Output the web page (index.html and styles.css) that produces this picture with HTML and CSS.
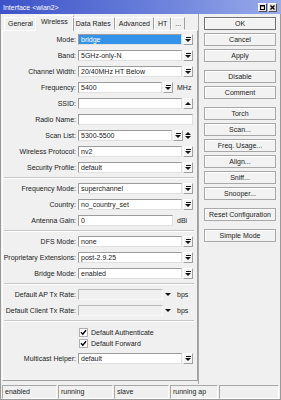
FILE: index.html
```html
<!DOCTYPE html>
<html lang="en">
<head>
  <meta charset="UTF-8">
  <title>Interface &lt;wlan2&gt;</title>
  <link rel="stylesheet" href="styles.css">
</head>
<body>

<div class="window">
  <div class="titlebar">
    <span class="title">Interface &lt;wlan2&gt;</span>
    <div class="tb-btns">
      <span class="tb-btn"><svg width="5" height="5" viewBox="0 0 5 5"><rect x="0.5" y="0.5" width="4" height="4" fill="none" stroke="#000"/><rect width="5" height="1.5" fill="#000"/></svg></span>
      <span class="tb-btn"><svg width="5" height="5" viewBox="0 0 5 5"><path d="M0.5 0.5l4 4M4.5 0.5l-4 4" stroke="#000" stroke-width="1.3"/></svg></span>
    </div>
  </div>

  <div class="main">
    <div class="left">
      <div class="tabs">
        <span class="tab">General</span>
        <span class="tab active">Wireless</span>
        <span class="tab">Data Rates</span>
        <span class="tab">Advanced</span>
        <span class="tab">HT</span>
        <span class="tab">...</span>
      </div>

      <div class="panel">
        <div class="group">
          <div class="row"><span class="lbl">Mode:</span><div class="field"><span class="input sel">bridge</span><span class="dd"></span></div></div>
          <div class="row"><span class="lbl">Band:</span><div class="field"><span class="input">5GHz-only-N</span><span class="dd"></span></div></div>
          <div class="row"><span class="lbl">Channel Width:</span><div class="field"><span class="input">20/40MHz HT Below</span><span class="dd"></span></div></div>
          <div class="row"><span class="lbl">Frequency:</span><div class="field"><span class="input">5400</span><span class="dd"></span><span class="unit">MHz</span></div></div>
          <div class="row"><span class="lbl">SSID:</span><div class="field"><span class="input"></span><span class="dd up"></span></div></div>
          <div class="row"><span class="lbl">Radio Name:</span><div class="field"><span class="input"></span></div></div>
          <div class="row"><span class="lbl">Scan List:</span><div class="field"><span class="input">5300-5500</span><span class="dd"></span><span class="updown"></span></div></div>
          <div class="row"><span class="lbl">Wireless Protocol:</span><div class="field"><span class="input">nv2</span><span class="dd"></span></div></div>
          <div class="row"><span class="lbl">Security Profile:</span><div class="field"><span class="input">default</span><span class="dd"></span></div></div>
        </div>

        <div class="sep"></div>

        <div class="group">
          <div class="row"><span class="lbl">Frequency Mode:</span><div class="field"><span class="input">superchannel</span><span class="dd"></span></div></div>
          <div class="row"><span class="lbl">Country:</span><div class="field"><span class="input">no_country_set</span><span class="dd"></span></div></div>
          <div class="row"><span class="lbl">Antenna Gain:</span><div class="field"><span class="input">0</span><span class="unit">dBi</span></div></div>
        </div>

        <div class="sep"></div>

        <div class="group">
          <div class="row"><span class="lbl">DFS Mode:</span><div class="field"><span class="input">none</span><span class="dd"></span></div></div>
          <div class="row"><span class="lbl">Proprietary Extensions:</span><div class="field"><span class="input">post-2.9.25</span><span class="dd"></span></div></div>
          <div class="row"><span class="lbl">Bridge Mode:</span><div class="field"><span class="input">enabled</span><span class="dd"></span></div></div>
        </div>

        <div class="sep"></div>

        <div class="group">
          <div class="row"><span class="lbl">Default AP Tx Rate:</span><div class="field"><span class="input off"></span><span class="arrow"></span><span class="unit">bps</span></div></div>
          <div class="row"><span class="lbl">Default Client Tx Rate:</span><div class="field"><span class="input off"></span><span class="arrow"></span><span class="unit">bps</span></div></div>
        </div>

        <div class="sep"></div>

        <div class="checks">
          <div class="check"><span class="cb"><svg width="7" height="7" viewBox="0 0 7 7"><path d="M1 3.3l1.8 1.9L6 1.2" stroke="#000" stroke-width="1.4" fill="none"/></svg></span>Default Authenticate</div>
          <div class="check"><span class="cb"><svg width="7" height="7" viewBox="0 0 7 7"><path d="M1 3.3l1.8 1.9L6 1.2" stroke="#000" stroke-width="1.4" fill="none"/></svg></span>Default Forward</div>
        </div>
        <div class="row"><span class="lbl">Multicast Helper:</span><div class="field"><span class="input">default</span><span class="dd"></span></div></div>
      </div>
    </div>

    <div class="right">
      <div class="bgroup">
        <span class="btn default">OK</span>
        <span class="btn">Cancel</span>
        <span class="btn">Apply</span>
      </div>
      <div class="bgroup">
        <span class="btn">Disable</span>
        <span class="btn">Comment</span>
      </div>
      <div class="bgroup">
        <span class="btn">Torch</span>
        <span class="btn">Scan...</span>
        <span class="btn">Freq. Usage...</span>
        <span class="btn">Align...</span>
        <span class="btn">Sniff...</span>
        <span class="btn">Snooper...</span>
      </div>
      <div class="bgroup">
        <span class="btn">Reset Configuration</span>
      </div>
      <div class="bgroup">
        <span class="btn">Simple Mode</span>
      </div>
    </div>
  </div>

  <div class="status">
    <span class="cell">enabled</span>
    <span class="cell">running</span>
    <span class="cell">slave</span>
    <span class="cell short">running ap</span>
    <span class="cell rest"></span>
  </div>
</div>

</body>
</html>
```

FILE: styles.css
```css
body { margin: 0; font-family: "Liberation Sans", Arial, sans-serif; font-size: 7px; color: #222; background: #fff; }

.window { width: 281px; height: 400px; box-sizing: border-box; background: #f0f0f0; border: 1px solid #9a9a9a; border-top: none; display: flex; flex-direction: column; }

.titlebar { height: 14px; flex: none; margin: 0 -1px; padding: 0 4px 0 3px; background: linear-gradient(to right, #3d52c8, #6e84dc 60%, #9aaceb); color: #fff; display: flex; align-items: center; justify-content: space-between; }
.tb-btns { display: flex; gap: 1px; }
.tb-btn { width: 9px; height: 9px; box-sizing: border-box; background: #e4e2dc; border: 1px solid; border-color: #fff #505050 #505050 #fff; display: flex; align-items: center; justify-content: center; }

.main { height: 370px; display: flex; }
.left { width: 196px; padding: 1px 0 3px 1px; display: flex; flex-direction: column; }
.right { flex: 1; border-left: 1px solid #a8a8a8; padding: 3px 0 0 5px; }

/* tabs */
.tabs { height: 15px; display: flex; align-items: flex-end; padding-left: 2px; position: relative; z-index: 1; }
.tab { height: 13px; box-sizing: border-box; padding: 0 3px; border: 1px solid; border-color: #fff #a0a0a0 transparent #fff; line-height: 11px; white-space: nowrap; }
.tab.active { height: 16px; margin: 0 -2px -1px; padding: 0 5px; background: #f0f0f0; line-height: 12px; border-bottom: none; }

.panel { flex: 1; border: 1px solid; border-color: #fff #a0a0a0 #a0a0a0 #fff; padding: 3px 3px 0 1px; }

.group { display: flex; flex-direction: column; gap: 5px; }
.row { height: 11px; display: flex; align-items: center; }
.lbl { width: 72px; margin-right: 2px; display: flex; justify-content: flex-end; white-space: nowrap; }
.field { width: 115px; height: 11px; display: flex; }

.input { flex: 1; box-sizing: border-box; height: 11px; background: #fff; border: 1px solid; border-color: #9c9c9c #e0e0e0 #e0e0e0 #9c9c9c; padding: 0 2px; line-height: 9px; white-space: nowrap; overflow: hidden; }
.input.sel { background: #3393ea; color: #fff; }
.input.off { background: #f0f0f0; border-color: #b8b8b8 #f8f8f8 #f8f8f8 #b8b8b8; }

.dd { width: 10px; height: 11px; box-sizing: border-box; margin-left: 1px; background: #f4f4f4; border: 1px solid; border-color: #fff #a0a0a0 #a0a0a0 #fff; display: flex; flex-direction: column; align-items: center; justify-content: center; gap: 1px; }
.dd::before { content: ""; width: 5px; height: 1px; background: #111; }
.dd::after { content: ""; border-style: solid; border-width: 3px 3px 0; border-color: #111 transparent transparent; }
.dd.up::before { display: none; }
.dd.up::after { border-width: 0 3px 3px; border-color: transparent transparent #111; }

.unit { width: 20px; padding-left: 4px; box-sizing: border-box; line-height: 11px; }
.arrow { width: 10px; display: flex; align-items: center; justify-content: center; }
.arrow::after { content: ""; border-style: solid; border-width: 3px 3px 0; border-color: #111 transparent transparent; }
.updown { width: 10px; display: flex; flex-direction: column; align-items: center; justify-content: center; gap: 1px; }
.updown::before { content: ""; border-style: solid; border-width: 0 3px 3px; border-color: transparent transparent #111; }
.updown::after { content: ""; border-style: solid; border-width: 3px 3px 0; border-color: #111 transparent transparent; }

.sep { height: 0; border-top: 1px solid #c8c8c8; border-bottom: 1px solid #fff; margin: 4px 0 4px; }

.checks { display: flex; flex-direction: column; gap: 4px; padding: 3px 0 6px 76px; }
.check { height: 7px; display: flex; align-items: center; gap: 4px; }
.cb { width: 7px; height: 7px; background: #fff; display: flex; box-shadow: 0 0 0 1px #b0b0b0; }

/* buttons */
.bgroup { display: flex; flex-direction: column; gap: 3px; margin-bottom: 8px; }
.btn { width: 72px; height: 13px; box-sizing: border-box; background: #f2f2f2; border: 1px solid #a8a8a8; box-shadow: inset 1px 1px #fff; display: flex; align-items: center; justify-content: center; white-space: nowrap; }
.btn.default { border-color: #707070; }

/* status bar */
.status { height: 15px; padding: 1px 1px 0; display: flex; gap: 1px; box-sizing: border-box; }
.cell { width: 55px; box-sizing: border-box; border: 1px solid; border-color: #a8a8a8 #fff #fff #a8a8a8; padding-left: 2px; line-height: 11px; }
.cell.short { width: 48px; }
.cell.rest { flex: 1; }
```
